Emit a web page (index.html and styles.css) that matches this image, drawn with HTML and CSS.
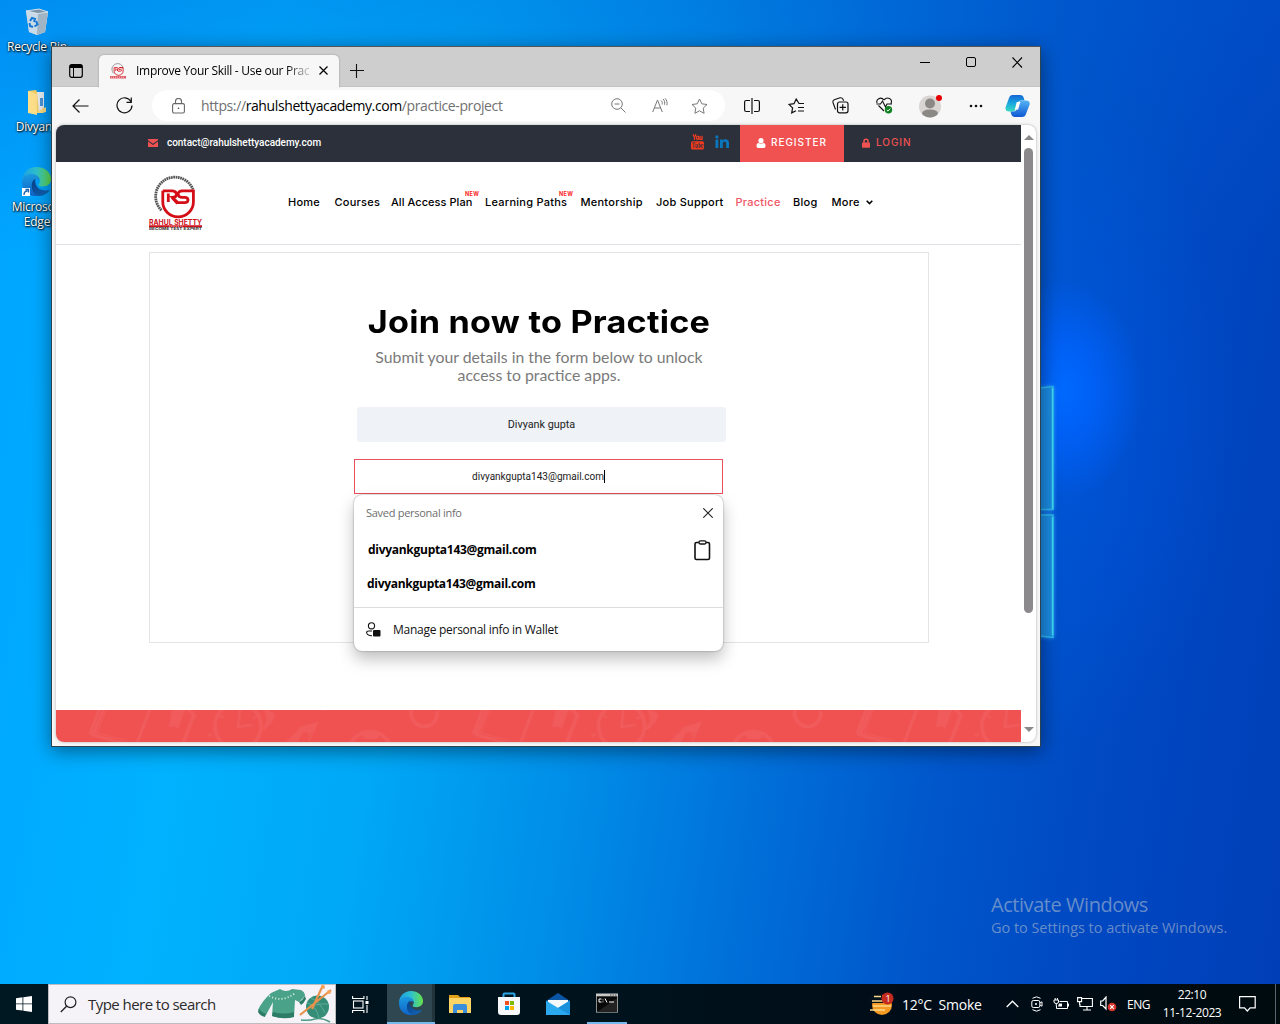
FILE: index.html
```html
<!DOCTYPE html>
<html lang="en">
<head>
<meta charset="utf-8">
<title>Improve Your Skill - Use our Practice</title>
<link rel="stylesheet" href="styles.css">
</head>
<body>
<svg width="0" height="0" class="defs" aria-hidden="true">
  <defs>
    <linearGradient id="eg1" x1="0" y1="0" x2="1" y2="0"><stop offset="0" stop-color="#1b9de2"/><stop offset=".5" stop-color="#2fc1cf"/><stop offset="1" stop-color="#66e24a"/></linearGradient>
    <linearGradient id="eg2" x1="0" y1="0" x2="0" y2="1"><stop offset="0" stop-color="#1b9be0"/><stop offset="1" stop-color="#0f63c8"/></linearGradient>
    <linearGradient id="eg3" x1="0" y1="0" x2="1" y2="1"><stop offset="0" stop-color="#0a3f85"/><stop offset="1" stop-color="#1068bd"/></linearGradient>
    <linearGradient id="cp1" x1="0" y1="0" x2="0" y2="1"><stop offset="0" stop-color="#1566d6"/><stop offset=".5" stop-color="#19a7e0"/><stop offset="1" stop-color="#39dcc0"/></linearGradient>
    <linearGradient id="cp2" x1="0" y1="0" x2="0" y2="1"><stop offset="0" stop-color="#55b3f5"/><stop offset="1" stop-color="#0f58d3"/></linearGradient>
    <symbol id="edge" viewBox="0 0 24 24">
      <path d="M0 12C0 5 5 0 12 0c7 0 12 4.600 12 10 0 4-3 6.200-6.500 6.200-3 0-4.300-1-3.700-2 .8-1 1.200-2 .8-3.600C13.800 8 11.200 7 8.500 7 4 7 1 9.500 0 12z" fill="url(#eg1)"/>
      <path d="M0 12c.8-4.500 4.500-6.200 8-6.200 4 0 6.600 2.500 6.700 5.200C12.500 9.200 8.500 10.300 8 15c-.3 4 2.600 8 6.500 8.700C7 25.500 0 20.500 0 12z" fill="url(#eg2)"/>
      <path d="M8 15c.2-2.600 1.500-4.500 3.200-5.200-1 3 .6 9.700 8.300 9.700 1.300 0 2.700-.8 3-.3.5.7-3.800 4.800-8.200 4.700C10.500 23.400 7.700 19.500 8 15z" fill="url(#eg3)"/>
    </symbol>
    <symbol id="rs" viewBox="0 0 54 56">
      <path d="M12.400 35.200A19.300 19.300 0 1 1 44.100 14.900" fill="none" stroke="#555" stroke-width="2.800" stroke-dasharray="1.700 .6"/>
      <path d="M13.800 15.800V27A15.300 14.800 0 0 0 44.400 27V15.800H33.500q-4.300 0-4.300 3.300t4.300 3.200h2q3.500 0 3.500 2.700t-3.500 2.700H29L23.500 22.500q4 0 4-3.200t-4-3.500M13.800 15.800H24M32 15.800H44M19.300 18.500v8.500M23 22.500l5.500 6" fill="none" stroke="#d40d17" stroke-width="2.800"/>
    </symbol>
  </defs>
</svg>

<main class="desktop">
  <div class="logo-glow">
    <svg width="16" height="256" viewBox="0 0 16 256">
      <path d="M0 3l13-1.500v123H0zM0 130h13v122.500L0 251z" fill="#1b8ce4" stroke="#2bb8ee" stroke-width="1.500"/>
      <path d="M12.500 3v121M12.500 132v118" stroke="#3fdcf3" stroke-width="1.500"/>
    </svg>
  </div>

  <div class="shortcut bin">
    <svg width="24" height="28" viewBox="0 0 24 28"><path d="M1 3l13-2 9 3-3 20-8 3-8-3z" fill="#b9c9d6"/><path d="M1 3l12 2 10-1-3 20-8 3-8-3z" fill="#c9dbe8"/><path d="M13 5l10-1-3 20-8 3z" fill="#9fb4c4"/><path d="M1 3l13-2 9 3-10 1.500z" fill="#7c95a8" stroke="#e4eef5" stroke-width=".8"/><path d="M5 13l2-3 3 1-1 3M11 13l1.500 3.500-3 2M8 19l-3-1-.5-3" fill="none" stroke="#1478d4" stroke-width="2"/></svg>
    <span>Recycle Bin</span>
  </div>
  <div class="shortcut folder">
    <svg width="20" height="26" viewBox="0 0 20 26"><path d="M1 2l8-1 1 2h7v21H1z" fill="#f5cf66"/><path d="M10 3h7v15l-5 6z" fill="#e8eef2"/><path d="M13 9h3v8h-3z" fill="#4a94d8"/><path d="M1 2l9 3v21l-9-2z" fill="#ffe08a"/><path d="M12 22l7-4v5l-6 1h-3z" fill="#fbdc80"/></svg>
    <span>Divyank</span>
  </div>
  <div class="shortcut edge-link">
    <svg width="30" height="30" viewBox="0 0 30 30"><use href="#edge" x="0" y="0" width="29" height="29"/><path d="M0 21h8v8H0z" fill="#fff"/><path d="M2 28c0-3 1-4 3.500-4M3.500 22.500h3v3" fill="none" stroke="#1b62b0" stroke-width="1.300"/></svg>
    <span>Microsoft<br>Edge</span>
  </div>

  <section class="window">
    <header class="tabstrip">
      <svg class="ws" width="14" height="14" viewBox="0 0 14 14"><rect x=".7" y=".7" width="12.600" height="12.600" rx="2" fill="none" stroke="#000" stroke-width="1.200"/><path d="M1 1h12v3H1z"/><path d="M4.500 4v9" stroke="#000"/></svg>
      <div class="tab">
        <svg width="16" height="16" viewBox="0 0 16 16"><use href="#rs" x="0" y="0" width="16" height="16.500"/><path d="M0 13h16v2.500H0z" fill="#e0606a"/><path d="M1 14.200h14" stroke="#fff" stroke-width=".6" stroke-dasharray="1 1"/></svg>
        <span class="tab-title">Improve Your Skill - Use our Prac</span>
        <svg width="9" height="9" viewBox="0 0 9 9"><path d="M.5.500l8 8M8.500.500l-8 8" stroke="#000" stroke-width="1.200"/></svg>
      </div>
      <svg class="plus" width="14" height="14" viewBox="0 0 14 14"><path d="M6.500 0v14M0 6.500h14" stroke="#111" stroke-width="1.100"/></svg>
      <div class="winbtns">
        <svg width="11" height="11" viewBox="0 0 11 11"><path d="M0 5.500h10" stroke="#000"/></svg>
        <svg width="11" height="11" viewBox="0 0 11 11"><rect x=".5" y=".5" width="9" height="9" rx="1.500" fill="none" stroke="#000"/></svg>
        <svg width="11" height="11" viewBox="0 0 11 11"><path d="M.5.500l9.500 10M10 .500l-9.500 10" stroke="#000" stroke-width="1.100"/></svg>
      </div>
    </header>

    <nav class="toolbar">
      <svg class="back" width="17" height="16" viewBox="0 0 17 16"><path d="M16.500 8H1M7.500 1.500L1 8l6.500 6.500" fill="none" stroke="#111" stroke-width="1.200"/></svg>
      <svg class="reload" width="17" height="17" viewBox="0 0 17 17"><path d="M15 4.500A7.500 7.500 0 1 0 16 8.500M15.300.500v4.800h-4.800" fill="none" stroke="#111" stroke-width="1.200"/></svg>
      <div class="address">
        <svg width="13" height="16" viewBox="0 0 13 16"><rect x=".6" y="5.600" width="11.800" height="9.400" rx="1.500" fill="none" stroke="#666" stroke-width="1.100"/><path d="M3.500 5.500V3.500a3 3 0 0 1 6 0v2" fill="none" stroke="#666" stroke-width="1.100"/><circle cx="6.500" cy="10.300" r=".8" fill="#444"/></svg>
        <span class="url"><i>https://</i>rahulshettyacademy.com<i>/practice-project</i></span>
        <svg width="15" height="15" viewBox="0 0 15 15"><path d="M9.800 9.800l4.700 4.700M3.500 6h5" stroke="#777" fill="none"/><circle cx="6" cy="6" r="5.300" fill="none" stroke="#777"/></svg>
        <svg class="read" width="16" height="15" viewBox="0 0 16 15"><path d="M.7 14L5.500 2l4.800 12M2.300 10h6.400M9 2.500c1.300 1 1.500 2.500 1.200 4M11 1c1.700 1.500 2 3.700 1.500 5.700M13 .3c2 2 2.500 4.500 1.800 7" fill="none" stroke="#777"/></svg>
        <svg width="17" height="16" viewBox="0 0 17 16"><path d="M8.500 1l2.300 4.800 5.200.7-3.800 3.600.9 5.200-4.600-2.500-4.600 2.500.9-5.200L1 6.500l5.200-.7z" fill="none" stroke="#777"/></svg>
      </div>
      <svg class="t t1" width="16" height="16" viewBox="0 0 16 16"><path d="M6 2.500H2.200Q.6 2.500.6 4v8q0 1.500 1.600 1.500H6M10 2.500h3.800q1.600 0 1.600 1.500v8q0 1.500-1.600 1.500H10M8 0v16" fill="none" stroke="#111" stroke-width="1.200"/></svg>
      <svg class="t t2" width="17" height="16" viewBox="0 0 17 16"><path d="M16 5.500h-5L8.200 1 6 5.700 1 6.400l3.600 3.500-.9 5L8 12.700M10 9.500h6M10 13h6" fill="none" stroke="#111" stroke-width="1.200"/></svg>
      <svg class="t t3" width="17" height="17" viewBox="0 0 17 17"><path d="M3.500 12.500L1 5.500Q.5 3.500 2.300 2.700L8 .8q2-.5 3 1.400l.6 1.500" fill="none" stroke="#111" stroke-width="1.100"/><rect x="5.500" y="5" width="10.500" height="10.800" rx="2" fill="#f7f7f7" stroke="#111" stroke-width="1.200"/><path d="M10.750 7.300v6.200M7.600 10.400h6.300" stroke="#111" stroke-width="1.200"/></svg>
      <svg class="t t4" width="17" height="17" viewBox="0 0 17 17"><path d="M1 6C-.2 2.500 4.500-1 8 2.800 11.500-1 17 2 15 6.500M2.500 8.500L8 14M.5 7h4L6.500 4l3 6 1.500-3h5" fill="none" stroke="#111" stroke-width="1.100"/><circle cx="12.500" cy="12.800" r="3.700" fill="#0f8020"/><path d="M10.700 12.900l1.300 1.200 2.300-2.500" fill="none" stroke="#fff"/></svg>
      <svg class="t t5" width="24" height="24" viewBox="0 0 24 24"><circle cx="11" cy="12.500" r="11" fill="#d8d5d2"/><circle cx="11" cy="9.500" r="5" fill="#8b8986"/><path d="M3 20q0-4.500 8-4.500t8 4.500a11 11 0 0 1-16 0z" fill="#8b8986"/><circle cx="20" cy="4" r="3" fill="#e60000"/></svg>
      <svg class="t t6" width="14" height="4" viewBox="0 0 14 4"><g fill="#111"><circle cx="2" cy="2" r="1.300"/><circle cx="7" cy="2" r="1.300"/><circle cx="12" cy="2" r="1.300"/></g></svg>
      <svg class="t t7" width="25" height="24" viewBox="0 0 25 24"><path d="M7.500 1h7.500q3 0 3.800 3l.7 2.500h-3.500q-2.500 0-3.300 2.500l-2 6.500Q9.800 17.500 7.500 17.500H4Q-.3 17 .7 13L4 4Q5 1 7.500 1z" fill="url(#cp1)"/><path d="M17 23H10q-3 0-3.800-3l-.7-2.500H8.500q2.500 0 3.300-2.500l2-6.500Q15 6.500 17 6.500h4q4.300 0 3.600 4l-3.600 9.500q-1 3-4 3z" fill="url(#cp2)"/><path d="M11.700 8h4q-.6.600-1 2l-1.600 5.500H9.500q.5-.5.900-2z" fill="#fff"/></svg>
    </nav>

    <div class="viewport">
      <div class="page">
        <div class="topbar">
          <svg class="mail" width="10" height="8" viewBox="0 0 10 8"><path d="M0 0h10v1.200L5 4.800 0 1.200z M0 2.400l5 3.500 5-3.500V8H0z" fill="#f05252"/></svg>
          <span class="contact">contact@rahulshettyacademy.com</span>
          <svg class="yt" width="13" height="16" viewBox="0 0 13 16"><g fill="none" stroke="#ee3a20" stroke-width="1.300"><path d="M2 .3l1.500 3L5 .3M3.500 3v3"/><ellipse cx="6.600" cy="3.800" rx="1.100" ry="1.700"/><path d="M9 2v3.400h2M11 1.800V6"/></g><rect y="7.300" width="13" height="8.200" rx="1.500" fill="#ee3a20"/><path d="M1.300 8.800h3M2.800 9v5M5 10v3.500h1.600V10M8.200 8.500V14M8.400 10.500h1V13h-1M12 13.500h-1.300v-3H12v1.400" fill="none" stroke="#2b303b" stroke-width=".7"/></svg>
          <svg class="li" width="14" height="13" viewBox="0 0 14 13"><path d="M.5 4.500h2.800V13H.5z M5 4.500h2.700v1.200C9 3.500 14 3.800 14 8v5h-2.800V8.500c0-2.400-3.400-2.200-3.400 0V13H5z" fill="#0a77bd"/><circle cx="1.900" cy="1.900" r="1.600" fill="#0a77bd"/></svg>
          <a class="register"><svg width="10" height="10" viewBox="0 0 10 10"><circle cx="5" cy="2.700" r="2.600" fill="#fff"/><path d="M.5 8q0-3 2-3 2.500 1.500 5 0 2 0 2 3 0 2-1.500 2H2Q.5 10 .5 8z" fill="#fff"/></svg><span>REGISTER</span></a>
          <a class="login"><svg width="8" height="10" viewBox="0 0 8 10"><path d="M2 5V3.200a2 2 0 0 1 4 0V5" fill="none" stroke="#f05252" stroke-width="1.500"/><rect y="4.500" width="8" height="5.300" rx=".7" fill="#f05252"/></svg><span>LOGIN</span></a>
        </div>
        <div class="sitehead">
          <div class="brand">
            <svg width="54" height="58" viewBox="0 0 54 58"><use href="#rs" width="54" height="56"/><text x="0" y="49.500" textLength="53" lengthAdjust="spacingAndGlyphs" class="brand-name">RAHUL SHETTY</text><path d="M0 50.200h53v2H0z" fill="#cf1019"/><path d="M20 51.200h14" stroke="#fff" stroke-width=".6" stroke-dasharray="1 .8"/><text x="0" y="55.300" textLength="53" lengthAdjust="spacingAndGlyphs" class="brand-tag">BECOME TEST EXPERT</text></svg>
          </div>
          <div class="menu">
            <a>Home</a><a>Courses</a><a class="tight">All Access Plan<sup>NEW</sup></a><a>Learning Paths<sup>NEW</sup></a><a>Mentorship</a><a>Job Support</a><a class="on">Practice</a><a>Blog</a><a>More<svg width="7" height="5" viewBox="0 0 7 5"><path d="M.7.700l2.800 2.800L6.300.700" fill="none" stroke="#000" stroke-width="1.600"/></svg></a>
          </div>
        </div>
        <div class="card">
          <h1>Join now to Practice</h1>
          <p>Submit your details in the form below to unlock<br>access to practice apps.</p>
          <div class="field name">Divyank gupta</div>
          <div class="field email">divyankgupta143@gmail.com<b></b></div>
          <div class="autofill">
            <div class="af-head"><span>Saved personal info</span><svg width="10" height="10" viewBox="0 0 10 10"><path d="M.3.300l9.400 9.400M9.700.300L.3 9.700" stroke="#222" stroke-width="1.100"/></svg></div>
            <div class="af-row first"><span>divyankgupta143@gmail.com</span><svg width="17" height="21" viewBox="0 0 17 21"><rect x="1" y="2.500" width="14.500" height="17" rx="1.500" fill="none" stroke="#111" stroke-width="1.600"/><rect x="5" y=".8" width="7" height="3.200" rx="1.500" fill="#fff" stroke="#111" stroke-width="1.300"/></svg></div>
            <div class="af-row"><span>divyankgupta143@gmail.com</span></div>
            <div class="af-foot"><svg width="15" height="15" viewBox="0 0 15 15"><circle cx="5.500" cy="3.800" r="3.100" fill="none" stroke="#111" stroke-width="1.100"/><path d="M6 9H2.500Q.6 9 .6 10.500 1 13.700 6 13.700" fill="none" stroke="#111" stroke-width="1.100"/><rect x="7" y="8" width="7.500" height="6.500" rx="1" fill="#111"/></svg><span>Manage personal info in Wallet</span></div>
          </div>
        </div>
        <div class="sitefoot">
          <svg width="965" height="32">
            <defs><pattern id="doodle" width="383.500" height="40" patternUnits="userSpaceOnUse">
              <g fill="none" stroke="#f15b5b" stroke-width="3.500">
                <path d="M47 0L37 25l30 8M43 0L34 24M94-1L81 33" stroke-width="3"/><path d="M50 0L41 23l31 8" stroke-width="1"/>
                <path d="M132-1l6 6-11 28"/><circle cx="182" cy="16" r="23"/><path d="M184-1l-2 18 14-2" stroke-width="2.500"/><path d="M164 5l3 3M200 7l-3 2M156 24l-4 2" stroke-width="2"/>
                <path d="M236 31l8-13 17-5-8 18" stroke-width="1.500"/><circle cx="314" cy="43" r="21.500"/><path d="M298 32l-4 2M330 32l4 2"/><path d="M356-1a13 13 0 1 0 25 2M353 3l3 1"/>
              </g>
              <path d="M116 0h13l-7 19-3-3-6 1zM211 0q16 4-3 20l-2-1q8-9 2-19zM262 13l-18 5-14 14h12l4-9 6-1v5zM305 24l5-2h10l4 2-3 5h-12zM265 0h5l-2 1z" fill="#f15b5b"/>
            </pattern></defs>
            <rect width="965" height="32" fill="url(#doodle)"/>
          </svg>
        </div>
      </div>
      <div class="scroll">
        <svg width="10" height="5" viewBox="0 0 10 5"><path d="M5 0l5 5H0z" fill="#8b898b"/></svg>
        <div class="thumb"></div>
        <svg class="down" width="10" height="5" viewBox="0 0 10 5"><path d="M0 0h10L5 5z" fill="#8b898b"/></svg>
      </div>
    </div>
  </section>

  <div class="watermark"><div>Activate Windows</div><p>Go to Settings to activate Windows.</p></div>

  <footer class="taskbar">
    <div class="start"><svg width="16" height="16" viewBox="0 0 16 16"><path d="M0 2.300L6.500 1.300V7.500H0zM7.300 1.200L16 0v7.500H7.300zM0 8.300h6.500v6.300L0 13.700zM7.300 8.300H16V16l-8.700-1.200z" fill="#fff"/></svg></div>
    <div class="search">
      <svg width="17" height="17" viewBox="0 0 17 17"><circle cx="10.500" cy="6.200" r="5.400" fill="none" stroke="#222" stroke-width="1.200"/><path d="M6.800 10L.8 16" stroke="#222" stroke-width="1.300"/></svg>
      <span>Type here to search</span>
      <svg class="knit" width="74" height="38" viewBox="0 0 74 38">
        <path d="M13 8l9-4q6 4 12 0l9 1q4 2 4 6l-6 6-4-2-1 17q-11 2-22-1l1-14-7 13q-5 0-8-5 4-9 13-17z" fill="#4aa288"/><path d="M14 31l1-4q11 3 21 0v5q-11 3-22-1zM1 24q3 4 7 5l-1 3q-5-1-7-5zM41 17q4-2 6-6l1 3q-2 4-5 6z" fill="#2c7c68"/><path d="M11 11q14 7 26-3" fill="none" stroke="#cdeadb" stroke-width="1.800" stroke-dasharray="1.200 2"/>
        <path d="M43 35q8 1 14-1t15 3" fill="none" stroke="#4c9b87" stroke-width="1.500"/><circle cx="59.500" cy="22" r="11.500" fill="#358d78"/><path d="M49 18q9 2 12 15M53 13q9 4 14 15M49 24q9-6 21-5" fill="none" stroke="#5dab97"/><path d="M65 0L54 24M73 5L42 30" stroke="#e7924b" stroke-width="2.200"/><circle cx="65" cy="2" r="2" fill="#f2a45f"/><circle cx="71" cy="7" r="2" fill="#f2a45f"/>
      </svg>
    </div>
    <div class="slot"><svg width="17" height="17" viewBox="0 0 17 17"><g fill="none" stroke="#fff" stroke-width="1.100"><rect x="1.500" y="5" width="9.500" height="7"/><path d="M.6 0v2.500h11.300V0M.6 17v-2.500h11.300V17M15 0v4M15 9v8"/></g><rect x="13.500" y="5" width="3" height="3" fill="#fff"/></svg></div>
    <div class="slot active"><svg width="24" height="24"><use href="#edge" width="24" height="24"/></svg></div>
    <div class="slot"><svg width="22" height="20" viewBox="0 0 22 20"><path d="M0 1h9l2 2h10v6H0z" fill="#e2a117"/><path d="M0 4h22v15H0z" fill="#fdd465"/><path d="M4 19v-7q0-2 2-2h10q2 0 2 2v7h-4v-3H8v3z" fill="#3b8edb"/></svg></div>
    <div class="slot"><svg width="24" height="24" viewBox="0 0 24 24"><path d="M6.500 6V2.500q0-1 1-1h9q1 0 1 1V6" fill="none" stroke="#2aa6e8" stroke-width="2"/><path d="M1 5h22v15q0 3-3 3H4q-3 0-3-3z" fill="#f6f8fa"/><path d="M8 9h4v4H8z" fill="#f25022"/><path d="M13 9h4v4h-4z" fill="#7fba00"/><path d="M8 14h4v4H8z" fill="#00a4ef"/><path d="M13 14h4v4h-4z" fill="#ffb900"/></svg></div>
    <div class="slot"><svg width="24" height="22" viewBox="0 0 24 22"><path d="M0 8l12-8 12 8v5H0z" fill="#0a56a5"/><path d="M2 7h20v8H2z" fill="#f6f9fc"/><path d="M0 7.500L12 15l12-7.500V22H0z" fill="#2aa9ee"/><path d="M24 7.500V22L8 12.500l4 2.500z" fill="#1b90dc"/></svg></div>
    <div class="slot running"><svg width="22" height="20" viewBox="0 0 22 20"><path d="M0 .5h22v19H0z" fill="#c8c8c8"/><path d="M.7 3.300h20.600v15.500H.7z" fill="#080808"/><path d="M1 19L21 5v14z" fill="#222"/><path d="M5.500 6H3v3h2.500M7 6.500v.8M7 8.500v.8M9 5.500l2 4M13 9h5" fill="none" stroke="#fff"/><path d="M14 2h1.500M16.500 2H18M19 2h1.500" stroke="#555"/></svg></div>
    <div class="tray">
      <svg class="wx" width="25" height="25" viewBox="0 0 25 25"><circle cx="13" cy="13" r="10" fill="#f59a23"/><path d="M0 3h13l1 8H0z" fill="#021019"/><path d="M5 4.500h7M3 9h11M4 14h18M1 18h15" stroke="#ffd98a" stroke-width="1.500"/><circle cx="18.500" cy="6.500" r="6" fill="#c52b1e"/><text x="16.400" y="9.700" class="badge-n">1</text></svg>
      <span class="temp">12°C&nbsp; Smoke</span>
      <svg class="chev" width="13" height="8" viewBox="0 0 13 8"><path d="M.7 7l5.800-5.800L12.300 7" fill="none" stroke="#fff" stroke-width="1.300"/></svg>
      <svg class="cam" width="12" height="16" viewBox="0 0 12 16"><g fill="none" stroke="#fff"><path d="M1.500 2.300q4-3 8 0M1.500 13.700q4 3 8 0"/><rect x=".8" y="4.500" width="8" height="7" rx="1.500"/><path d="M9 7l2-1.200v4.400L9 9"/></g><circle cx="5" cy="8" r="1" fill="#fff"/></svg>
      <svg class="bat" width="16" height="13" viewBox="0 0 16 13"><path d="M6.500 3.500h8v7h-11V8M15.500 5.500v3M1 2h4.500v2q0 1.500-2.200 1.500T1 4zM2.200 0v2M4.400 0v2M3.300 5.500v3" fill="none" stroke="#fff"/><path d="M6 5.500h3v3H5z" fill="#fff"/></svg>
      <svg class="net" width="16" height="14" viewBox="0 0 16 14"><path d="M5 1.500h10.400v8H3V7M6 13h8M10 10v3M.6.600h4v4h-4zM2.600 5v3" fill="none" stroke="#fff" stroke-width="1.100"/></svg>
      <svg class="vol" width="17" height="16" viewBox="0 0 17 16"><path d="M.7 5h2L6 1v12L2.700 9.500h-2z" fill="none" stroke="#fff" stroke-width="1.200"/><circle cx="12" cy="11" r="4.300" fill="#d8352b"/><path d="M10.200 9.200l3.600 3.600M13.800 9.200l-3.600 3.600" stroke="#fff" stroke-width="1.200"/></svg>
      <span class="lang">ENG</span>
      <div class="clock">22:10<br>11-12-2023</div>
      <svg class="note" width="17" height="16" viewBox="0 0 17 16"><path d="M.6.600h15.600v11.200h-5L8.300 15l-2.800-3.200H.6z" fill="none" stroke="#fff" stroke-width="1.200"/></svg>
      <div class="peek"></div>
    </div>
  </footer>
</main>
</body>
</html>
```
FILE: styles.css
```css
* { box-sizing: border-box; }
body { margin: 0; overflow: hidden; font-family: "Open Sans", "Noto Sans", sans-serif; }
svg { display: block; flex: none; }
.defs { position: absolute; }

.desktop {
  position: relative;
  width: 1280px;
  height: 1024px;
  display: flex;
  flex-direction: column;
  justify-content: flex-end;
  overflow: hidden;
  background:
    radial-gradient(ellipse 80px 110px at 1062px 390px, #0069ff 0, rgba(0, 100, 255, .75) 40%, rgba(0, 90, 240, 0) 100%),
    radial-gradient(ellipse 190px 330px at 1050px 420px, rgba(0, 90, 235, .5), rgba(0, 80, 220, 0)),
    linear-gradient(180deg, rgba(0, 90, 210, .3), rgba(0, 120, 240, 0) 25%),
    linear-gradient(99deg, #00a4ff 0, #00b2ff 20%, #00a8f6 34%, #008ee8 48%, #006ed8 62%, #0056ca 74%, #0048c2 86%, #003eb6 100%);
}
.logo-glow { position: absolute; left: 1040px; top: 385px; filter: drop-shadow(0 0 2px #2fa3ff); }

.shortcut {
  position: absolute;
  width: 76px;
  display: flex;
  flex-direction: column;
  align-items: center;
  color: #fff;
  font-size: 12px;
  line-height: 15px;
  letter-spacing: -.25px;
  text-align: center;
  text-shadow: 1px 1px 2px #000, 0 0 2px #000;
}
.bin { left: -1px; top: 8px; gap: 3px; }
.folder { left: -1px; top: 89px; gap: 4px; }
.edge-link { left: -1px; top: 167px; gap: 2px; }

.window {
  position: absolute;
  left: 51px;
  top: 46px;
  width: 990px;
  height: 701px;
  border: 1px solid #2c4450;
  border-top-color: #555;
  background: #f7f7f7;
  box-shadow: 0 4px 18px rgba(0, 0, 0, .45);
}
.tabstrip { height: 40px; background: #cecece; display: flex; border-bottom: 1px solid #c4c4c4; }
.ws { margin: 17px 0 0 17px; }
.tab {
  width: 240px;
  height: 33px;
  margin: 8px 0 0 16px;
  padding: 0 11px 2px 11px;
  display: flex;
  align-items: center;
  background: #f7f7f7;
  border-radius: 5px 5px 0 0;
  box-shadow: 0 0 2px rgba(0, 0, 0, .3);
  clip-path: inset(-3px -3px 0 -3px);
}
.tab-title {
  width: 173px;
  margin: 0 10px;
  font-size: 12px;
  letter-spacing: -.28px;
  white-space: nowrap;
  -webkit-mask-image: linear-gradient(90deg, #000 150px, rgba(0, 0, 0, .15) 174px);
}
.plus { margin: 17px 0 0 11px; }
.winbtns { margin-left: auto; display: flex; gap: 35px; padding: 10px 17px 0 0; }

.toolbar { height: 38px; display: flex; align-items: center; padding-bottom: 1px; }
.back { margin-left: 20px; }
.reload { margin-left: 27px; }
.address {
  width: 573px;
  height: 31px;
  margin-left: 19px;
  padding: 0 17px 0 20px;
  border-radius: 16px;
  background: #fff;
  display: flex;
  align-items: center;
}
.url { width: 426px; padding-left: 16px; font-size: 14px; letter-spacing: -.39px; white-space: nowrap; }
.url i { font-style: normal; color: #707070; }
.read { margin: 0 23px 0 26px; }
.t1 { margin-left: 19px; }
.t2 { margin-left: 28px; }
.t3 { margin-left: 27px; }
.t4 { margin-left: 27px; }
.t5 { margin-left: 26px; }
.t6 { margin-left: 26px; }
.t7 { margin-left: 22px; }

.viewport {
  width: 980px;
  height: 617px;
  margin-left: 4px;
  display: flex;
  border-radius: 8px;
  background: #fff;
  overflow: hidden;
  box-shadow: 0 0 3px rgba(0, 0, 0, .3);
}
.page { width: 965px; display: flex; flex-direction: column; }
.scroll { width: 15px; padding-top: 10px; display: flex; flex-direction: column; align-items: center; }
.thumb { width: 9px; height: 465px; margin-top: 8px; border-radius: 5px; background: #8b898b; }
.down { margin-top: 114px; }

.topbar { height: 37px; background: #2b303b; display: flex; align-items: center; padding-bottom: 2px; }
.mail { margin: 1px 0 0 92px; }
.contact { width: 535px; padding-left: 9px; font: 500 10px Roboto, sans-serif; letter-spacing: -.03px; color: #fff; }
.yt { margin-left: -2px; margin-top: -2px; }
.li { margin-left: 11px; margin-top: -2px; }
.register, .login { display: flex; align-items: center; font: 500 10px Inter, sans-serif; letter-spacing: .95px; }
.register { width: 104px; height: 37px; margin: 0 0 -2px 11px; padding: 0 0 2px 16px; gap: 5px; background: #f05252; color: #fff; }
.login { margin-left: 18px; gap: 6px; color: #f05252; }
.register span, .login span { padding-bottom: 1px; }

.sitehead { height: 83px; border-bottom: 1px solid #e0e0e6; display: flex; }
.brand { margin: 13px 0 0 93px; }
.brand-name { font: 700 7px Inter, sans-serif; fill: #cf1019; }
.brand-tag { font: 700 3.200px Inter, sans-serif; fill: #333; }
.menu {
  margin: 33px 0 0 85px;
  height: 14px;
  display: grid;
  grid-template-columns: 46.500px 56.500px 94px 95.500px 75.500px 79.500px 57.500px 38.500px 45px;
  font: 450 11px/14px Inter, sans-serif;
  letter-spacing: .25px;
  color: #000;
  white-space: nowrap;
}
.menu a { position: relative; display: flex; align-items: center; gap: 6px; }
.menu .on { color: #f05565; }
.menu .tight { letter-spacing: .05px; }
.menu sup { position: absolute; left: 74px; top: -4px; font: 700 5.500px/7px Inter, sans-serif; letter-spacing: .3px; color: #f22; }

.card {
  position: relative;
  width: 780px;
  height: 391px;
  margin: 7px 0 0 93px;
  border: 1px solid #e4e4e6;
  display: flex;
  flex-direction: column;
}
h1 { margin: 47px 0 0; height: 44px; font: 700 31px/44px Inter, sans-serif; letter-spacing: .2px; text-align: center; color: #000; transform: scaleX(1.104); }
.card p { margin: 4px 0 0; height: 36px; font: 400 15.800px/18px Lato, sans-serif; text-align: center; color: #7a7a7a; }
.field { width: 369px; height: 35px; display: flex; align-items: center; justify-content: center; font: 400 10.800px Roboto, sans-serif; color: #222; }
.name { margin: 23px 0 0 207px; background: #eff2f7; border-radius: 3px; }
.email { margin: 17px 0 0 204px; border: 1px solid #e8505b; font-size: 10px; letter-spacing: 0; }
.email b { width: 1px; height: 13px; background: #000; }

.autofill {
  position: absolute;
  left: 204px;
  top: 242px;
  width: 369px;
  height: 156px;
  border-radius: 8px;
  background: #fff;
  box-shadow: 0 0 2px rgba(0, 0, 0, .4), 0 8px 16px rgba(0, 0, 0, .25);
}
.af-head { height: 36px; padding: 0 10px 0 12px; display: flex; align-items: center; justify-content: space-between; font-size: 11px; letter-spacing: -.28px; color: #6e6e6e; }
.af-head span { padding-bottom: 2px; }
.af-row { height: 34px; padding: 0 12px 5px 13px; display: flex; align-items: center; justify-content: space-between; font-size: 12px; font-weight: 700; letter-spacing: -.28px; color: #000; }
.af-row.first { height: 38px; padding: 0 12px 0 14px; }
.first span { padding-bottom: 1px; }
.af-foot { margin-top: 4px; height: 44px; padding-left: 12px; border-top: 1px solid #ddd; display: flex; align-items: center; gap: 12px; font-size: 12px; letter-spacing: -.27px; color: #111; }

.sitefoot { height: 32px; margin-top: auto; background: #f05252; }

.watermark { position: absolute; left: 991px; top: 892px; color: rgba(170, 185, 205, .62); white-space: nowrap; }
.watermark div { font-size: 20px; line-height: 26px; letter-spacing: -.45px; }
.watermark p { margin: 0; font-size: 14.500px; line-height: 20px; letter-spacing: -.04px; }

.taskbar { position: relative; height: 40px; display: flex; color: #fff; background: linear-gradient(90deg, #001822, #00131d 45%, #000c18 75%, #000b0e 100%); }
.start { width: 48px; display: flex; align-items: center; justify-content: center; }
.search { width: 288px; border: 1px solid #bdbdbd; background: #f6f3f8; display: flex; align-items: center; padding-left: 11px; color: #2b2b2b; }
.search span { width: 170px; margin-left: 11px; font-size: 15px; letter-spacing: -.55px; white-space: nowrap; }
.slot { width: 49px; display: flex; align-items: center; justify-content: center; }
.slot.active { width: 48px; margin-left: 2px; background: #2f4750; border-bottom: 2px solid #76b9ed; box-shadow: inset -3px 0 #22343c; }
.slot.running { width: 40px; margin-left: 5px; border-bottom: 2px solid #76b9ed; }
.tray { flex: 1; display: flex; align-items: center; }
.wx { margin-left: 242px; }
.temp { width: 100px; margin-left: 8px; font-size: 14px; letter-spacing: -.25px; white-space: nowrap; }
.chev { margin-left: 4px; }
.cam { margin-left: 12px; }
.bat { margin-left: 10px; }
.net { margin-left: 8px; }
.vol { margin-left: 7px; }
.lang { width: 25px; margin-left: 10px; font-size: 12px; letter-spacing: -.45px; }
.clock { width: 62px; margin-left: 9px; font-size: 12px; line-height: 18px; letter-spacing: -.4px; text-align: center; white-space: nowrap; }
.note { margin-left: 16px; }
.peek { width: 1px; height: 40px; margin: 0 4px 0 auto; background: #5a6470; }
.badge-n { font: 9px "Open Sans", sans-serif; fill: #fff; }
```
